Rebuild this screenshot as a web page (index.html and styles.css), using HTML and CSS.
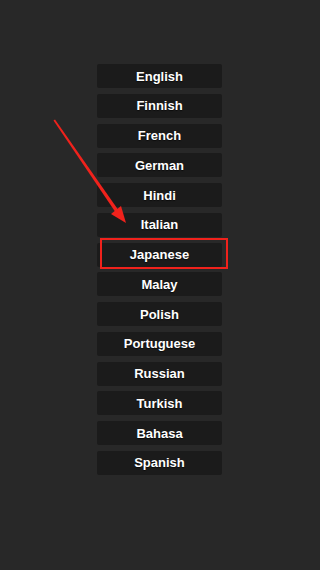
FILE: index.html
```html
<!DOCTYPE html>
<html lang="en">
<head>
    <meta charset="UTF-8">
    <meta name="viewport" content="width=device-width, initial-scale=1.0">
    <title>Language</title>
    <link rel="stylesheet" href="styles.css">
</head>
<body>

<div class="screen">
    <div class="lang-list">
        <div class="lang-btn">English</div>
        <div class="lang-btn">Finnish</div>
        <div class="lang-btn">French</div>
        <div class="lang-btn">German</div>
        <div class="lang-btn">Hindi</div>
        <div class="lang-btn">Italian</div>
        <div class="lang-btn">Japanese</div>
        <div class="lang-btn">Malay</div>
        <div class="lang-btn">Polish</div>
        <div class="lang-btn">Portuguese</div>
        <div class="lang-btn">Russian</div>
        <div class="lang-btn">Turkish</div>
        <div class="lang-btn">Bahasa</div>
        <div class="lang-btn">Spanish</div>
    </div>

    <!-- annotation overlay -->
    <svg class="overlay" width="320" height="570" viewBox="0 0 320 570">
        <rect x="101" y="239" width="126" height="29" fill="none" stroke="#f0221c" stroke-width="2"/>
        <polygon points="53.5,120.5 55,119.5 119,211 116,213" fill="#f0221c"/>
        <polygon points="126,223 111,214 121,206" fill="#f0221c"/>
    </svg>
</div>

</body>
</html>
```

FILE: styles.css
```css
body {
    margin: 0;
    padding: 0;
    background-color: #282828;
    font-family: "Liberation Sans", Arial, sans-serif;
}

.screen {
    position: relative;
    width: 320px;
    height: 570px;
    overflow: hidden;
}

.lang-list {
    display: flex;
    flex-direction: column;
    align-items: center;
    gap: 5.75px;
    padding-top: 64px;
}

.lang-btn {
    width: 125px;
    height: 24px;
    margin-left: -1px;
    background-color: #1b1b1b;
    border-radius: 2px;
    color: #ffffff;
    font-size: 13px;
    font-weight: bold;
    display: flex;
    align-items: center;
    justify-content: center;
    text-shadow: 0 1px 1px rgba(0, 0, 0, 0.6);
}

.overlay {
    position: absolute;
    top: 0;
    left: 0;
}
```
